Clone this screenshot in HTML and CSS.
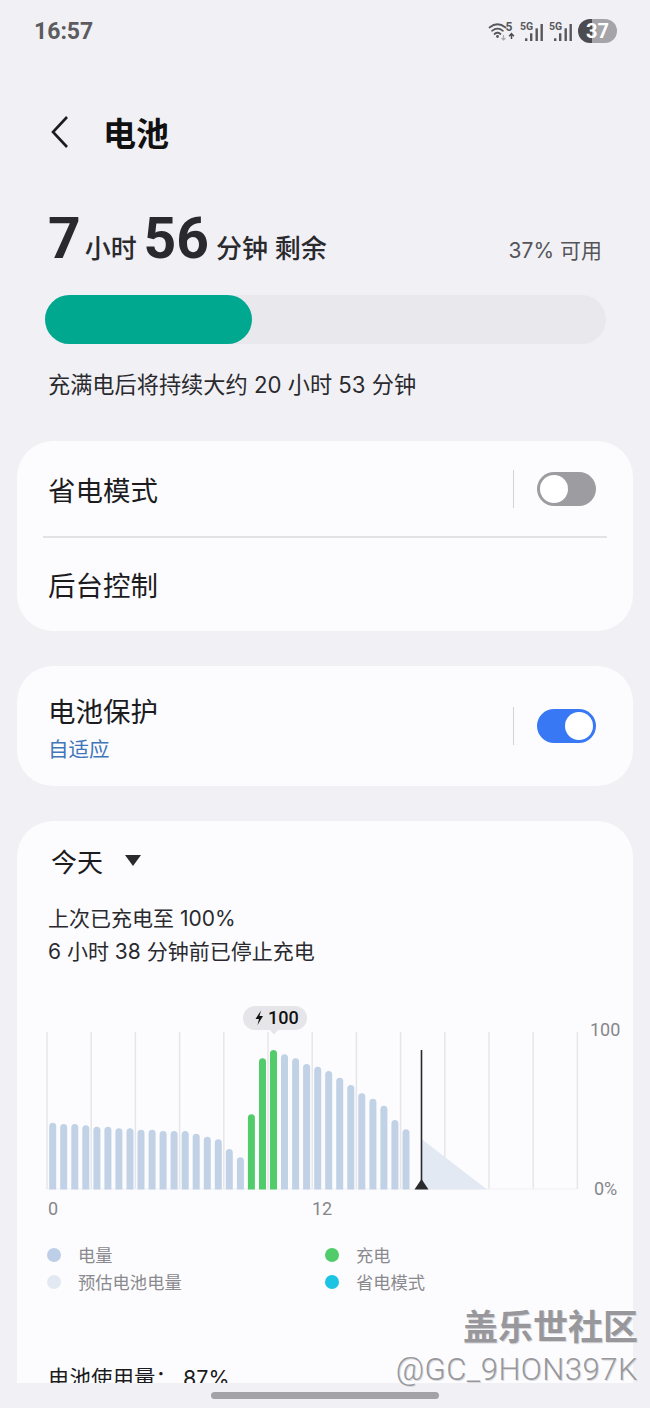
FILE: index.html
```html
<!DOCTYPE html>
<html lang="zh-CN">
<head>
  <meta charset="UTF-8">
  <meta name="viewport" content="width=device-width, initial-scale=1.0">
  <title>电池</title>
  <link rel="stylesheet" href="styles.css">
</head>
<body>
  <div class="screen">
    <div class="status-bar">
      <span class="clock">16:57</span>
      <div class="status-icons">
        <svg class="net-icons" width="86" height="26" viewBox="487 18 86 26">
          <g fill="none" stroke="#58585c" stroke-width="1.7" stroke-linecap="round">
            <path d="M489.500 27.500q8-6.500 16 0"/>
            <path d="M492 30.800q5.500-4.500 11 0"/>
            <path d="M494.500 34q3-2.500 6 0"/>
          </g>
          <circle cx="497.500" cy="36.500" r="1.400" fill="#58585c"/>
          <path d="M503.500 35v5m-2-2 2 2 2-2" fill="none" stroke="#aaaaae" stroke-width="1.200"/>
          <path d="M511.500 39v-5m-2.400 2.200 2.400-2.600 2.400 2.600" fill="none" stroke="#4c4c50" stroke-width="1.500"/>
          <text class="net-five" x="505.500" y="30.500">5</text>
          <text class="net-text" x="520" y="29.500">5G</text>
          <text class="net-text" x="549" y="29.500">5G</text>
          <g fill="#58585c">
            <rect x="525" y="38.300" width="2.400" height="2.700"/>
            <rect x="530" y="33.300" width="2.400" height="7.700"/>
            <rect x="535.500" y="28.300" width="2.400" height="12.700"/>
            <rect x="540.500" y="24" width="2.400" height="17"/>
            <rect x="554" y="38.300" width="2.400" height="2.700"/>
            <rect x="559" y="33.300" width="2.400" height="7.700"/>
            <rect x="564.500" y="28.300" width="2.400" height="12.700"/>
            <rect x="569.500" y="24" width="2.400" height="17"/>
          </g>
        </svg>
        <div class="battery-pill">37</div>
      </div>
    </div>

    <div class="content">
      <div class="title-bar">
        <svg class="back-icon" width="20" height="34" viewBox="0 0 20 34">
          <path d="M17 2 3 17l14 15" fill="none" stroke="#1c1c1e" stroke-width="2.600"/>
        </svg>
        <h1>电池</h1>
      </div>

      <div class="remaining">
        <div class="time-left">
          <span class="big-num big-hours">7</span> 小时 <span class="big-num">56</span> 分钟 剩余
        </div>
        <div class="available">37% 可用</div>
      </div>

      <div class="battery-bar"><div class="battery-fill"></div></div>
      <p class="full-note">充满电后将持续大约 20 小时 53 分钟</p>

      <section class="card card-modes">
        <div class="row row-first">
          <span class="row-label">省电模式</span>
          <div class="switch-wrap"><span class="switch switch-off"></span></div>
        </div>
        <div class="row-line"></div>
        <div class="row row-second">
          <span class="row-label">后台控制</span>
        </div>
      </section>

      <section class="card card-protect">
        <div class="row-text">
          <span class="row-label">电池保护</span>
          <span class="row-sub">自适应</span>
        </div>
        <div class="switch-wrap"><span class="switch switch-on"></span></div>
      </section>

      <section class="card card-usage">
        <div class="period">今天 <span class="caret"></span></div>
        <p class="charge-note">上次已充电至 100%<br>6 小时 38 分钟前已停止充电</p>

        <svg class="chart" width="616" height="220" viewBox="17 1000 616 220">
          <g stroke="#e6e6ea" stroke-width="1.500">
            <path d="M47 1032v157M91.200 1032v157M135.400 1032v157M179.600 1032v157M223.800 1032v157M268 1032v157M312.200 1032v157M356.400 1032v157M400.600 1032v157M444.800 1032v157M489 1032v157M533.200 1032v157M577.400 1032v157"/>
          </g>
          <path d="M47 1189h530" stroke="#f0f0f3" stroke-width="1"/>
          <path d="M421.500 1139 487 1189.500H421.500z" fill="#e3e9f2"/>
          <clipPath id="plot"><rect x="40" y="1030" width="540" height="159.500"/></clipPath>
          <g clip-path="url(#plot)" fill="#c1d1e6">
            <rect x="49.200" y="1122.700" width="7" height="80" rx="3.500"/>
            <rect x="60.200" y="1124" width="7" height="80" rx="3.500"/>
            <rect x="71.300" y="1124" width="7" height="80" rx="3.500"/>
            <rect x="82.300" y="1125.300" width="7" height="80" rx="3.500"/>
            <rect x="93.400" y="1126.700" width="7" height="80" rx="3.500"/>
            <rect x="104.400" y="1126.700" width="7" height="80" rx="3.500"/>
            <rect x="115.400" y="1128.300" width="7" height="80" rx="3.500"/>
            <rect x="126.500" y="1128.300" width="7" height="80" rx="3.500"/>
            <rect x="137.500" y="1129.700" width="7" height="80" rx="3.500"/>
            <rect x="148.600" y="1129.700" width="7" height="80" rx="3.500"/>
            <rect x="159.600" y="1131" width="7" height="80" rx="3.500"/>
            <rect x="170.600" y="1131" width="7" height="80" rx="3.500"/>
            <rect x="181.700" y="1131" width="7" height="80" rx="3.500"/>
            <rect x="192.700" y="1133.700" width="7" height="80" rx="3.500"/>
            <rect x="203.800" y="1136.700" width="7" height="80" rx="3.500"/>
            <rect x="214.800" y="1139.300" width="7" height="80" rx="3.500"/>
            <rect x="225.800" y="1149" width="7" height="80" rx="3.500"/>
            <rect x="236.900" y="1157.300" width="7" height="80" rx="3.500"/>
            <rect x="281" y="1054.300" width="7" height="160" rx="3.500"/>
            <rect x="292.100" y="1058.300" width="7" height="160" rx="3.500"/>
            <rect x="303.100" y="1064" width="7" height="160" rx="3.500"/>
            <rect x="314.200" y="1066.700" width="7" height="160" rx="3.500"/>
            <rect x="325.200" y="1071" width="7" height="160" rx="3.500"/>
            <rect x="336.200" y="1077.700" width="7" height="160" rx="3.500"/>
            <rect x="347.300" y="1085" width="7" height="160" rx="3.500"/>
            <rect x="358.300" y="1093.300" width="7" height="160" rx="3.500"/>
            <rect x="369.400" y="1098.700" width="7" height="160" rx="3.500"/>
            <rect x="380.400" y="1105.700" width="7" height="160" rx="3.500"/>
            <rect x="391.400" y="1120" width="7" height="160" rx="3.500"/>
            <rect x="402.500" y="1129.300" width="7" height="160" rx="3.500"/>
            <g fill="#52cc6a">
              <rect x="247.900" y="1114.300" width="7" height="160" rx="3.500"/>
              <rect x="259" y="1058.300" width="7" height="160" rx="3.500"/>
              <rect x="270" y="1050" width="7" height="160" rx="3.500"/>
            </g>
          </g>
          <path d="M421.500 1050v135" stroke="#2a2a2e" stroke-width="1.600"/>
          <path d="M421.500 1179 428.500 1189.500H414.500z" fill="#2a2a2e"/>
          <rect x="243" y="1006" width="64" height="24" rx="12" fill="#e6e6ea"/>
          <path d="M269 1029h10l-5 5.500z" fill="#e6e6ea"/>
          <path d="M261 1010.500 255.500 1019h3.500l-1.500 6 5.500-9h-3.500z" fill="#111"/>
          <text class="bubble-num" x="268" y="1024">100</text>
          <text class="axis-text" x="48" y="1215">0</text>
          <text class="axis-text" x="312" y="1215">12</text>
          <text class="axis-text" x="590" y="1036">100</text>
          <text class="axis-text" x="594" y="1195">0%</text>
        </svg>

        <div class="legend">
          <div class="legend-item"><span class="dot dot-level"></span>电量</div>
          <div class="legend-item"><span class="dot dot-charge"></span>充电</div>
          <div class="legend-item"><span class="dot dot-estimate"></span>预估电池电量</div>
          <div class="legend-item"><span class="dot dot-saver"></span>省电模式</div>
        </div>

        <p class="usage-line">电池使用量：&nbsp;87%</p>
      </section>
    </div>

    <div class="nav-strip"><span class="home-bar"></span></div>

    <div class="watermark">
      <div class="wm-title">盖乐世社区</div>
      <div class="wm-user">@GC_9HON397K</div>
    </div>
  </div>
</body>
</html>
```

FILE: styles.css
```css
* {
  box-sizing: border-box;
}

body {
  margin: 0;
  background: #f1f1f5;
  font-family: "Inter", "Noto Sans CJK SC", sans-serif;
  color: #1c1c1e;
}

.screen {
  position: relative;
  width: 650px;
  height: 1408px;
  overflow: hidden;
  display: flex;
  flex-direction: column;
}

/* Status bar */
.status-bar {
  flex: none;
  height: 62px;
  padding: 0 33px 0 34px;
  display: flex;
  justify-content: space-between;
  align-items: center;
}

.clock {
  font-family: "Roboto", sans-serif;
  font-size: 23px;
  font-weight: 700;
  color: #5c5c60;
}

.status-icons {
  display: flex;
  align-items: center;
  gap: 5px;
}

.net-icons {
  display: block;
}

.net-text {
  font-family: "Roboto", sans-serif;
  font-size: 10.500px;
  font-weight: 700;
  fill: #58585c;
}

.net-five {
  font-family: "Roboto", sans-serif;
  font-size: 12px;
  font-weight: 700;
  fill: #58585c;
}

.battery-pill {
  width: 39px;
  height: 24px;
  border-radius: 12px;
  background: linear-gradient(90deg, #4c4c50 0 14px, #a4a4a9 14px);
  color: #fff;
  font-family: "Roboto", sans-serif;
  font-size: 20px;
  font-weight: 700;
  line-height: 24px;
  text-align: center;
}

/* Scrolling part */
.content {
  flex: none;
  height: 1321px;
  overflow: hidden;
}

.title-bar {
  height: 72px;
  padding-left: 50px;
  margin: 34px 0 35px;
  display: flex;
  align-items: center;
}

.back-icon {
  display: block;
  margin-right: 33px;
}

h1 {
  margin: 0;
  font-size: 33px;
  font-weight: 700;
  color: #111;
}

.remaining {
  height: 72px;
  padding: 0 48px 0 48px;
  display: flex;
  justify-content: space-between;
  align-items: center;
}

.time-left {
  font-size: 26px;
  font-weight: 500;
  color: #2a2a2e;
}

.big-num {
  font-family: "Roboto", sans-serif;
  font-size: 57px;
  font-weight: 700;
  line-height: 60px;
}

.big-hours {
  margin-right: -3px;
}

.available {
  margin-top: 20px;
  font-size: 21px;
  color: #555559;
}

.battery-bar {
  width: 561px;
  height: 49px;
  margin: 20px 0 0 45px;
  border-radius: 25px;
  background: #e9e9ed;
}

.battery-fill {
  width: 207px;
  height: 49px;
  border-radius: 25px;
  background: #00a890;
}

.full-note {
  margin: 25px 0 0 48px;
  font-size: 22.200px;
  line-height: 32px;
  color: #2a2a2e;
}

/* Cards */
.card {
  margin: 0 17px;
  background: #fcfcfe;
  border-radius: 36px;
}

.card-modes {
  height: 190px;
  margin-top: 40px;
}

.row {
  display: flex;
  align-items: center;
  justify-content: space-between;
}

.row-first {
  height: 95px;
  padding: 0 37px 0 31px;
}

.row-second {
  height: 93px;
  padding: 0 31px;
}

.row-line {
  height: 1.500px;
  margin: 0 26px;
  background: #e3e3e6;
}

.row-label {
  font-size: 27.500px;
  color: #1c1c1e;
}

.switch-wrap {
  height: 38px;
  padding-left: 23px;
  border-left: 1.500px solid #d3d3d7;
  display: flex;
  align-items: center;
}

.switch {
  position: relative;
  display: block;
  width: 59px;
  height: 34px;
  border-radius: 17px;
}

.switch::after {
  content: "";
  position: absolute;
  top: 3px;
  width: 28px;
  height: 28px;
  border-radius: 50%;
  background: #fff;
}

.switch-off {
  background: #9c9ca1;
}

.switch-off::after {
  left: 3px;
}

.switch-on {
  background: #3878f4;
}

.switch-on::after {
  right: 3px;
}

.card-protect {
  height: 120px;
  margin-top: 35px;
  padding: 0 37px 0 31px;
  display: flex;
  align-items: center;
  justify-content: space-between;
}

.row-text {
  padding-top: 6px;
  display: flex;
  flex-direction: column;
}

.row-text .row-label {
  line-height: 38px;
}

.row-sub {
  margin-top: 3px;
  font-size: 20.500px;
  line-height: 32px;
  color: #3f76b8;
}

.card-usage {
  height: 600px;
  margin-top: 35px;
  padding-top: 21px;
}

.period {
  height: 36px;
  padding-left: 34px;
  display: flex;
  align-items: center;
  gap: 22px;
  font-size: 26px;
  color: #1c1c1e;
}

.caret {
  width: 0;
  height: 0;
  border-left: 8.500px solid transparent;
  border-right: 8.500px solid transparent;
  border-top: 11px solid #2a2a2e;
}

.charge-note {
  margin: 24px 0 0 31px;
  font-size: 21px;
  line-height: 33px;
  color: #2a2a2e;
}

.chart {
  display: block;
  margin-top: 32px;
}

.bubble-num {
  font-family: "Roboto", sans-serif;
  font-size: 18px;
  font-weight: 500;
  fill: #111;
}

.axis-text {
  font-family: "Roboto", sans-serif;
  font-size: 18px;
  fill: #86868a;
}

.legend {
  display: grid;
  grid-template-columns: 278px 1fr;
  row-gap: 0;
  margin: 21px 0 0 30px;
}

.legend-item {
  height: 27px;
  display: flex;
  align-items: center;
  gap: 17px;
  font-size: 17.300px;
  color: #8a8a8e;
}

.dot {
  width: 14px;
  height: 14px;
  border-radius: 50%;
}

.dot-level {
  background: #bdcfe6;
}

.dot-charge {
  background: #52cc6a;
}

.dot-estimate {
  background: #e3e9f2;
}

.dot-saver {
  background: #1cc4e4;
}

.usage-line {
  margin: 68px 0 0 31px;
  font-size: 21.500px;
  line-height: 30px;
  color: #1c1c1e;
}

/* Bottom strip */
.nav-strip {
  flex: 1;
  padding-top: 9px;
  display: flex;
  justify-content: center;
}

.home-bar {
  width: 228px;
  height: 7px;
  border-radius: 4px;
  background: #a2a2a7;
}

/* Watermark lies over everything */
.watermark {
  position: absolute;
  right: 12px;
  top: 1304px;
  text-align: right;
  font-family: "Noto Sans CJK SC", sans-serif;
  color: #98989c;
  text-shadow: 1px 1px 0 #d9d9dc, -1px -1px 0 #fff;
}

.wm-title {
  font-size: 35px;
  font-weight: 700;
  line-height: 42px;
}

.wm-user {
  margin-top: 6px;
  font-family: "Roboto", sans-serif;
  font-size: 31px;
  font-weight: 300;
  line-height: 36px;
  letter-spacing: 0.500px;
}
```
